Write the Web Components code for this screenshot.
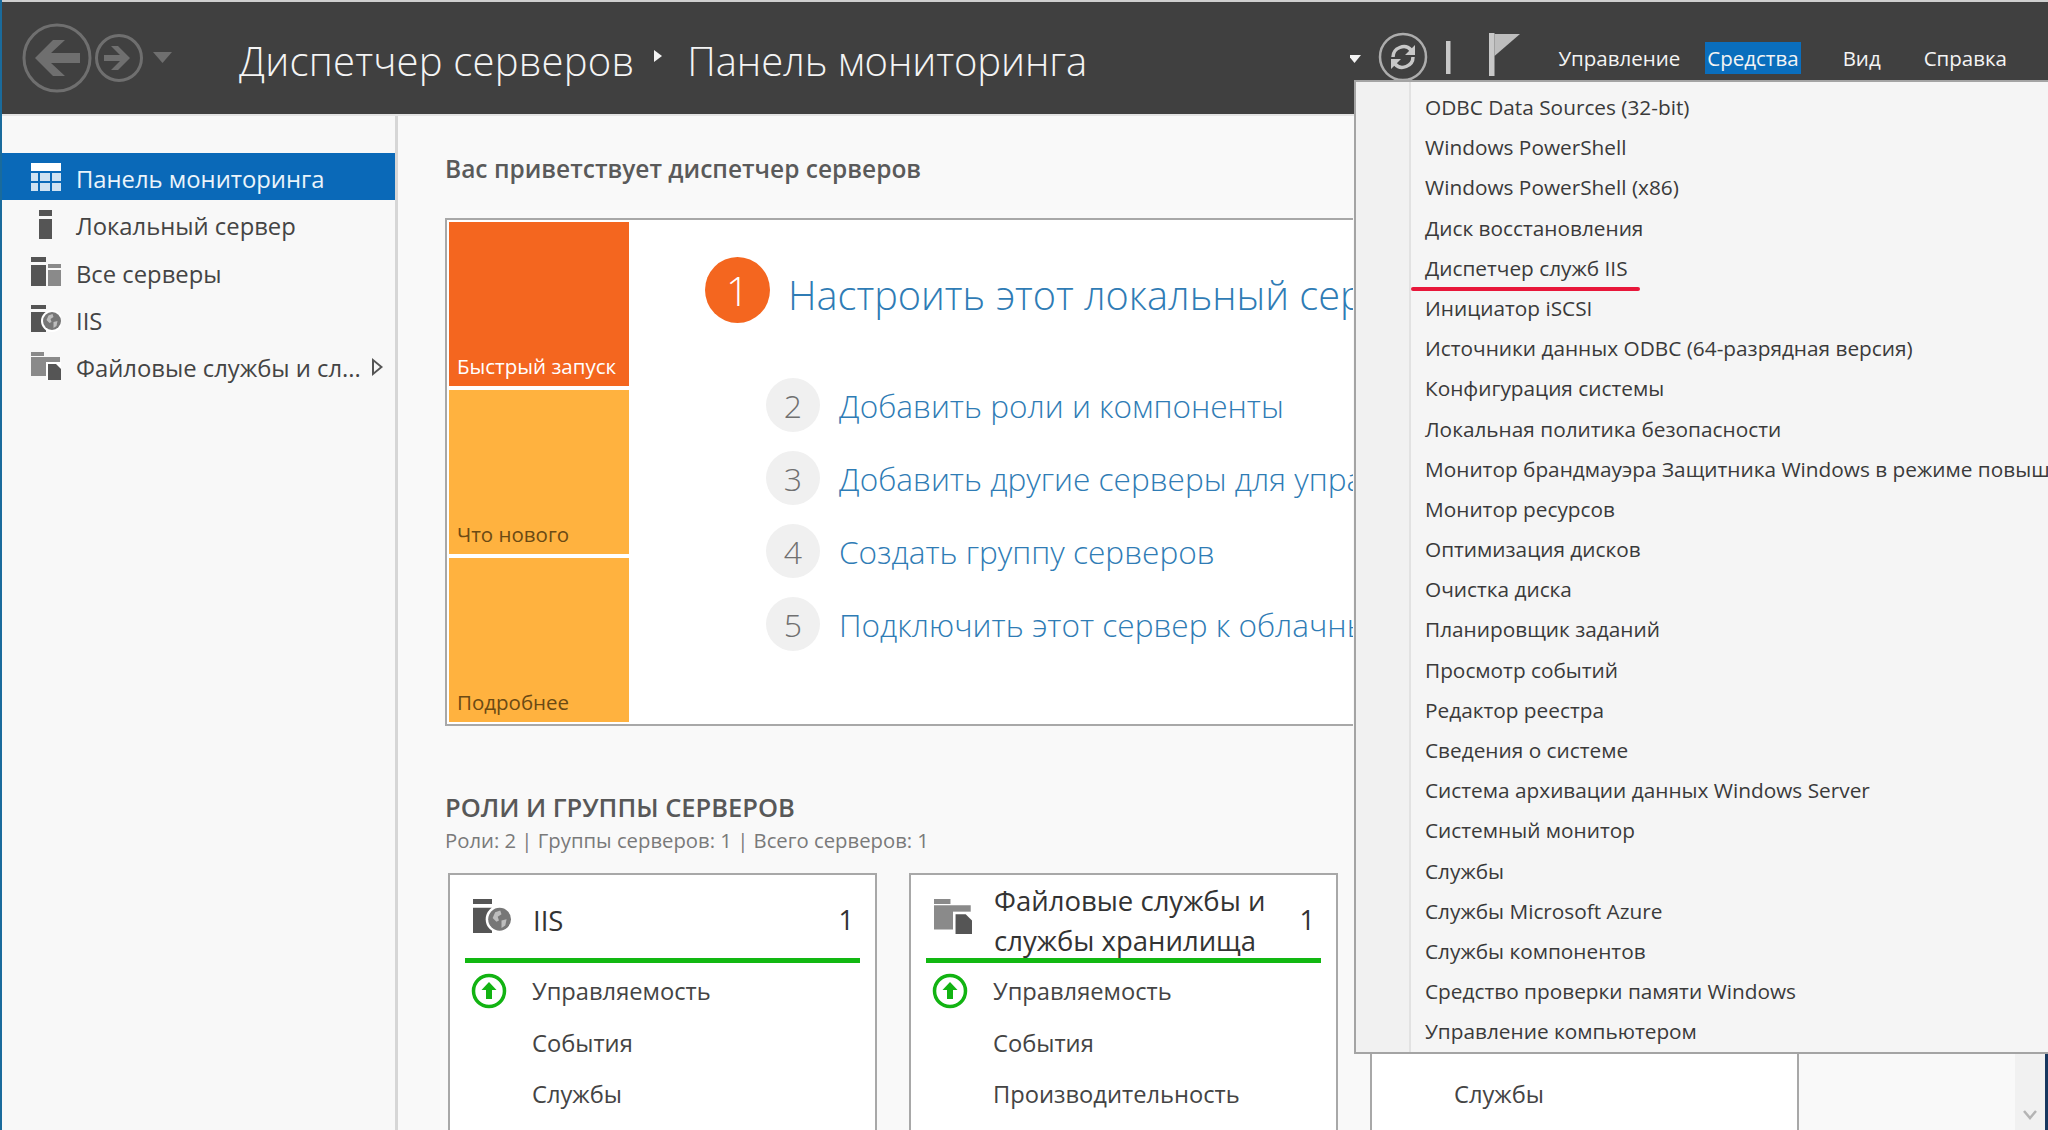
<!DOCTYPE html>
<html lang="ru">
<head>
<meta charset="utf-8">
<title>Диспетчер серверов</title>
<style>
  html, body { margin: 0; height: 100%; overflow: hidden; }
  body { font-family: "Open Sans", "Noto Sans", sans-serif; background: #f9f9f9; }
</style>
</head>
<body>
<server-manager></server-manager>

<script>
const ICONS = {
  dashboard: `<svg width="30" height="28" viewBox="0 0 30 28"><path fill="#fff" d="M0 0h30v8H0z"/><path fill="#cfe2f2" d="M0 10h7v8H0zM9 10h10v8H9zM21 10h9v8h-9zM0 20h7v8H0zM9 20h10v8H9zM21 20h9v8h-9z"/></svg>`,
  server: `<svg width="30" height="29" viewBox="0 0 30 29"><path fill="#555" d="M8 0h13v6H8zM8 9h13v20H8z"/></svg>`,
  servers: `<svg width="30" height="29" viewBox="0 0 30 29"><path fill="#555" d="M0 0h15v5H0zM0 8h15v21H0z"/><path fill="#8a8a8a" d="M17 7h13v4H17zM17 13h13v16H17z"/></svg>`,
  iis: `<svg width="100%" height="100%" viewBox="0 0 30 27"><path fill="#555" d="M0 0h15v4H0zM0 7h15v20H0z"/><circle cx="21" cy="16" r="11" fill="#fff"/><circle cx="21" cy="16" r="9" fill="#777"/><path fill="#bdbdbd" d="M17.500 10.500l4-1.500 1 3-3 2 1 3-2 1-3-3zM22.500 17l4-1-1 5-3 2z"/></svg>`,
  files: `<svg width="100%" height="100%" viewBox="0 0 30 28"><path fill="#8a8a8a" d="M0 0h13v4H0zM0 5h29v19H0z"/><path fill="#fff" d="M15 10h15v18H15z"/><path fill="#555" d="M17 12h8l5 5v11H17z"/></svg>`
};

const define = (name, html, cls = HTMLElement) => {
  customElements.define(name, class extends cls {
    connectedCallback() {
      if (this.shadowRoot) return;
      this.attachShadow({mode: "open"}).innerHTML = typeof html === "function" ? html(this) : html;
    }
  });
};

define("sm-icon", el => `
  <style>:host { display: block; line-height: 0; } svg { display: block; }</style>
  ${ICONS[el.getAttribute("name")]}`);

define("sm-header", `
  <style>
    :host { display: flex; align-items: center; height: 112px; box-sizing: content-box;
      border-top: 2px solid #cfcfcf; background: #404040; color: #f4f4f4; }
    .nav { display: block; margin-left: 19px; flex: none; }
    .title { display: flex; align-items: center; margin-left: 64px; font-size: 40px; font-weight: 300;
      letter-spacing: .2px; padding-top: 4px; white-space: nowrap; }
    .sep { width: 0; height: 0; margin: 0 25px 8px 20px; border-left: 8px solid #f4f4f4;
      border-top: 6px solid transparent; border-bottom: 6px solid transparent; }
    .page { letter-spacing: -.1px; }
    .tools { display: flex; align-items: center; margin-left: auto; flex: none; }
    .tools svg { display: block; margin-right: 26px; }
  </style>
  <svg class="nav" width="154" height="72" viewBox="0 0 154 72" fill="none">
    <g stroke="#6f6f6f">
      <circle cx="36" cy="36" r="33" stroke-width="3"/>
      <circle cx="98" cy="36" r="22.5" stroke-width="3"/>
    </g>
    <path fill="#6f6f6f" d="M14 36l18-18h12L30 31h29v10H30l14 13H32zM83 33h16l-9-9h7l12 12-12 12h-7l9-9H83z"/>
    <path fill="#6f6f6f" d="M132 30h19l-9.5 11z"/>
  </svg>
  <div class="title"><slot name="app"></slot><span class="sep"></span><span class="page"><slot name="page"></slot></span></div>
  <div class="tools">
    <svg width="180" height="60" viewBox="0 0 180 60" fill="none">
      <path fill="#f4f4f4" d="M-2 27h13l-6.500 8z"/>
      <circle cx="53" cy="29" r="23" stroke="#adadad" stroke-width="2.500"/>
      <path stroke="#c8c8c8" stroke-width="3.500" d="M43 29c0-9 12-14 18-7M63 29c0 9-12 14-18 7"/>
      <path fill="#c8c8c8" d="M65 17v10H55zM41 41V31h10z"/>
      <path fill="#c8c8c8" d="M96 13h4.500v33H96zM139 5h5.500v43H139z"/>
      <path fill="#bdbdbd" d="M144.500 6H170L144.500 28z"/>
    </svg>
    <slot></slot>
  </div>`);

define("sm-top-item", `
  <style>
    :host { display: block; padding: 0 2px; line-height: 33px; height: 32px; font-size: 20.500px;
      white-space: nowrap; margin-right: var(--gap, 0); }
    :host([active]) { background: #0a6ebd; }
  </style>
  <slot></slot>`);

define("sm-nav-item", el => `
  <style>
    :host { display: flex; align-items: center; gap: 15px; height: 47px; padding: 5px 0 0 29px; box-sizing: border-box;
      color: #444; font-size: 23.800px; white-space: nowrap; position: relative; }
    :host([selected]) { background: #0a69b8; color: #eaf4fb; }
    .i { width: 30px; flex: none; margin-top: -4px; }
    .more { margin-left: -4px; width: 0; height: 0; position: relative; top: -1px;
      border-left: 11px solid #555; border-top: 9px solid transparent; border-bottom: 9px solid transparent; }
    .more::after { content: ""; position: absolute; left: -9px; top: -5px; width: 0; height: 0;
      border-left: 6px solid #f8f8f8; border-top: 5px solid transparent; border-bottom: 5px solid transparent; }
  </style>
  <div class="i"><sm-icon name="${el.getAttribute("icon")}"></sm-icon></div>
  <slot></slot>
  ${el.hasAttribute("more") ? '<span class="more"></span>' : ""}`);

define("sm-sidebar", `
  <style>
    :host { display: grid; grid-auto-rows: 47.300px; align-content: start; flex: none; width: 393px; padding: 37px 0 0 0;
      margin-left: 2px; background: #f8f8f8; border-right: 3px solid #d6d6d6; }
  </style>
  <slot></slot>`);

define("sm-tile", `
  <style>
    :host { display: flex; align-items: flex-end; height: 164px; padding: 0 8px 6px; box-sizing: border-box;
      background: #ffb23f; color: #6b4a14; font-size: 20.500px; white-space: nowrap; }
    :host([hot]) { background: #f4661f; color: #fff; }
  </style>
  <slot></slot>`);

define("sm-step", `
  <style>
    :host { display: flex; align-items: center; gap: 19px; height: 73px; color: #2f7cb5; font-weight: 300;
      font-size: 31.600px; white-space: nowrap; }
    .n { flex: none; width: 54px; height: 54px; border-radius: 50%; background: #f0f0f0; color: #707070;
      display: flex; align-items: center; justify-content: center; font-size: 32px; }
  </style>
  <span class="n"><slot name="n"></slot></span><slot></slot>`);

define("sm-quick-start", `
  <style>
    :host { display: flex; height: 508px; width: 908px; box-sizing: border-box; padding: 2px 0 2px 2px; border: 2px solid #a8a8a8;
      border-right: 0; background: #fff; overflow: hidden; }
    .tiles { display: flex; flex-direction: column; gap: 4px; width: 180px; flex: none; }
    .body { margin-left: 76px; padding-top: 35px; min-width: 0; }
    .lead { display: flex; align-items: center; gap: 18px; height: 66px; color: #2f7cb5; font-weight: 300;
      font-size: 39.700px; white-space: nowrap; }
    .lead span.t { padding-top: 9px; }
    .one { flex: none; width: 65px; height: 66px; border-radius: 50%; background: #f4661f; color: #fff;
      display: flex; align-items: center; justify-content: center; font-size: 40px; }
    .steps { margin: 45.500px 0 0 61px; }
  </style>
  <div class="tiles"><slot name="tile"></slot></div>
  <div class="body">
    <div class="lead"><span class="one">1</span><span class="t"><slot name="lead"></slot></span></div>
    <div class="steps"><slot></slot></div>
  </div>`);

define("sm-row", el => `
  <style>
    :host { display: flex; align-items: center; height: 51.500px; padding: 5px 0 0 67px; box-sizing: border-box; position: relative;
      font-size: 23.700px; color: #444; white-space: nowrap; }
    svg { position: absolute; left: 6px; top: 10px; }
  </style>
  ${el.hasAttribute("ok") ? `<svg width="36" height="36" viewBox="0 0 36 36">
    <circle cx="18" cy="18" r="15.500" fill="#fff" stroke="#12b312" stroke-width="3.500"/>
    <path fill="#12b312" d="M18 9l7.500 8H21v9h-6v-9h-4.500z"/></svg>` : ""}
  <slot></slot>`);

define("sm-role-card", el => `
  <style>
    :host { display: block; width: 429px; height: 300px; box-sizing: border-box; border: 2px solid #a8a8a8;
      background: #fff; padding: 0 15px; flex: none; }
    .head { display: flex; align-items: center; height: 83px; border-bottom: 5px solid #12b812; }
    .i { width: 38px; height: 35px; margin-left: 8px; flex: none; }
    .name { flex: 1; margin-left: 22px; font-size: 27.500px; line-height: 40px; color: #333; min-width: 0; height: 78px;
      display: flex; align-items: center; padding-top: 8px; box-sizing: border-box; }
    .count { font-size: 27px; color: #333; margin-right: 6px; padding-top: 6px; }
  </style>
  <div class="head">
    ${el.hasAttribute("icon") ? `<div class="i"><sm-icon name="${el.getAttribute("icon")}"></sm-icon></div>` : '<div class="i"></div>'}
    <div class="name"><div><slot name="name"></slot></div></div>
    <div class="count"><slot name="count"></slot></div>
  </div>
  <slot></slot>`);

define("sm-roles", `
  <style>
    :host { display: block; margin-top: 65px; }
    h2 { margin: 0; font-size: 25.500px; line-height: 32px; font-weight: 600; color: #585858; }
    p { margin: 1px 0 0; font-size: 20.300px; line-height: 32px; color: #7a7a7a; }
    .cards { display: flex; gap: 32px; margin: 17px 0 0 3px; }
  </style>
  <h2><slot name="title"></slot></h2>
  <p><slot name="sub"></slot></p>
  <div class="cards"><slot></slot></div>`);

define("sm-content", `
  <style>
    :host { display: block; flex: 1; min-width: 0; padding: 35px 0 0 46px; overflow: hidden; background: #f9f9f9; }
    h1 { margin: 0 0 31px 1px; font-size: 24.500px; line-height: 36px; font-weight: 600; color: #5a5a5a; white-space: nowrap; }
    .qs { margin-left: 1px; }
  </style>
  <h1><slot name="welcome"></slot></h1>
  <div class="qs"><slot></slot></div>`);

define("sm-scrollbar", `
  <style>
    :host { display: flex; align-items: flex-end; justify-content: center; flex: none; width: 30px; background: #f1f1f1;
      border-right: 3px solid #17375f; }
    svg { margin-bottom: 10px; }
  </style>
  <svg width="16" height="10" viewBox="0 0 16 10" fill="none"><path d="M2 1l6 7 6-7" stroke="#b4b4b4" stroke-width="2.500"/></svg>`);

define("sm-menu-item", el => `
  <style>
    :host { display: block; height: 40.200px; line-height: 40.200px; padding-left: 14px; font-size: 20.800px;
      color: #3a3a3a; white-space: nowrap; position: relative; }
    .mark { position: absolute; left: 0; top: 39px; width: 229px; height: 4.500px; border-radius: 3px; background: #e8173a; }
  </style>
  <slot></slot>${el.hasAttribute("marked") ? '<span class="mark"></span>' : ""}`);

define("sm-tools-menu", `
  <style>
    :host { display: flex; position: absolute; top: 80px; left: 1352px; right: 0; height: 974px; box-sizing: border-box;
      border: 2px solid #a4a4a4; border-right: 0; background: #f5f5f5; overflow: hidden; }
    .gutter { width: 53px; flex: none; background: #f1f1f1; border-right: 2px solid #e2e2e2; }
    .list { padding-top: 5px; min-width: 0; }
  </style>
  <div class="gutter"></div>
  <div class="list"><slot></slot></div>`);

define("server-manager", `
  <style>
    :host { display: flex; flex-direction: column; height: 1130px; position: relative; overflow: hidden;
      border-left: 2px solid #1a6b9c; box-sizing: border-box; }
    .main { display: flex; flex: 1; min-height: 0; border-top: 2px solid #e4e4e4; margin-left: -2px; }
  </style>
  <slot name="header"></slot>
  <div class="main">
    <slot name="sidebar"></slot>
    <slot name="content"></slot>
    <slot name="scroll"></slot>
  </div>
  <slot name="menu"></slot>`);

// page content
const items = ["ODBC Data Sources (32-bit)", "Windows PowerShell", "Windows PowerShell (x86)", "Диск восстановления",
  "Диспетчер служб IIS", "Инициатор iSCSI", "Источники данных ODBC (64-разрядная версия)", "Конфигурация системы",
  "Локальная политика безопасности", "Монитор брандмауэра Защитника Windows в режиме повышенной безопасности",
  "Монитор ресурсов", "Оптимизация дисков", "Очистка диска", "Планировщик заданий", "Просмотр событий", "Редактор реестра",
  "Сведения о системе", "Система архивации данных Windows Server", "Системный монитор", "Службы", "Службы Microsoft Azure",
  "Службы компонентов", "Средство проверки памяти Windows", "Управление компьютером"];

document.querySelector("server-manager").innerHTML = `
  <sm-header slot="header">
    <span slot="app">Диспетчер серверов</span>
    <span slot="page">Панель мониторинга</span>
    <sm-top-item style="--gap:23px">Управление</sm-top-item>
    <sm-top-item active style="--gap:40px">Средства</sm-top-item>
    <sm-top-item style="--gap:39px">Вид</sm-top-item>
    <sm-top-item style="--gap:39px">Справка</sm-top-item>
  </sm-header>
  <sm-sidebar slot="sidebar">
    <sm-nav-item icon="dashboard" selected>Панель мониторинга</sm-nav-item>
    <sm-nav-item icon="server">Локальный сервер</sm-nav-item>
    <sm-nav-item icon="servers">Все серверы</sm-nav-item>
    <sm-nav-item icon="iis">IIS</sm-nav-item>
    <sm-nav-item icon="files" more>Файловые службы и сл...</sm-nav-item>
  </sm-sidebar>
  <sm-content slot="content">
    <span slot="welcome">Вас приветствует диспетчер серверов</span>
    <sm-quick-start>
      <sm-tile slot="tile" hot>Быстрый запуск</sm-tile>
      <sm-tile slot="tile">Что нового</sm-tile>
      <sm-tile slot="tile">Подробнее</sm-tile>
      <span slot="lead">Настроить этот локальный сервер</span>
      <sm-step><span slot="n">2</span>Добавить роли и компоненты</sm-step>
      <sm-step><span slot="n">3</span>Добавить другие серверы для управления</sm-step>
      <sm-step><span slot="n">4</span>Создать группу серверов</sm-step>
      <sm-step><span slot="n">5</span>Подключить этот сервер к облачным службам</sm-step>
    </sm-quick-start>
    <sm-roles>
      <span slot="title">РОЛИ И ГРУППЫ СЕРВЕРОВ</span>
      <span slot="sub">Роли: 2 | Группы серверов: 1 | Всего серверов: 1</span>
      <sm-role-card icon="iis">
        <span slot="name">IIS</span><span slot="count">1</span>
        <sm-row ok>Управляемость</sm-row><sm-row>События</sm-row><sm-row>Службы</sm-row>
      </sm-role-card>
      <sm-role-card icon="files">
        <span slot="name">Файловые службы и службы хранилища</span><span slot="count">1</span>
        <sm-row ok>Управляемость</sm-row><sm-row>События</sm-row><sm-row>Производительность</sm-row>
      </sm-role-card>
      <sm-role-card>
        <sm-row></sm-row><sm-row></sm-row><sm-row>Службы</sm-row>
      </sm-role-card>
    </sm-roles>
  </sm-content>
  <sm-scrollbar slot="scroll"></sm-scrollbar>
  <sm-tools-menu slot="menu">
    ${items.map(t => `<sm-menu-item${t === "Диспетчер служб IIS" ? " marked" : ""}>${t}</sm-menu-item>`).join("")}
  </sm-tools-menu>`;
</script>
</body>
</html>
